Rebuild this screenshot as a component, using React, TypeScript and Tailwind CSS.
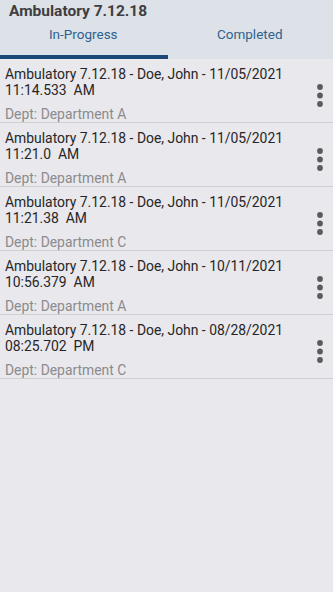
const rows = [
  { time: '11/05/2021', clock: '11:14.533  AM', dept: 'Department A' },
  { time: '11/05/2021', clock: '11:21.0  AM', dept: 'Department A' },
  { time: '11/05/2021', clock: '11:21.38  AM', dept: 'Department C' },
  { time: '10/11/2021', clock: '10:56.379  AM', dept: 'Department A' },
  { time: '08/28/2021', clock: '08:25.702  PM', dept: 'Department C' },
];

function MoreIcon() {
  return (
    <svg width="8" height="26" viewBox="0 0 8 26" className="shrink-0">
      <circle cx="4" cy="4" r="2.9" fill="#5b5b5d" />
      <circle cx="4" cy="12.5" r="2.9" fill="#5b5b5d" />
      <circle cx="4" cy="21" r="2.9" fill="#5b5b5d" />
    </svg>
  );
}

export default function App() {
  return (
    <div className="w-[333px] h-[592px] bg-[#e9e8ec] font-['Roboto',sans-serif] overflow-hidden">
      <div className="bg-[#dde1e8]">
        <div className="px-[9px] pt-[1px] h-[21px] text-[15.5px] leading-[20px] font-bold text-[#3e3e40]">
          Ambulatory 7.12.18
        </div>
        <div className="flex h-[38px]">
          <div className="flex-1 flex flex-col">
            <div className="flex-1 flex items-center justify-center pb-[7px] text-[13.5px] text-[#2f628f]">
              In-Progress
            </div>
            <div className="h-[4px] bg-[#1b4876] mr-[-1px]" />
          </div>
          <div className="flex-1 flex flex-col">
            <div className="flex-1 flex items-center justify-center pb-[7px] text-[13.5px] text-[#2f628f]">
              Completed
            </div>
            <div className="h-[4px]" />
          </div>
        </div>
      </div>
      {rows.map((r, i) => (
        <div key={i} className="flex items-center border-b border-[#cfcfd3] pl-[5px] pr-[9px]">
          <div className="flex-1 pt-[7px] text-[13.9px] leading-[16px] whitespace-pre">
            <div className="text-[#262628]">Ambulatory 7.12.18 - Doe, John - {r.time}</div>
            <div className="text-[#262628]">{r.clock}</div>
            <div className="mt-[8px] text-[#8b8b8e]">Dept: {r.dept}</div>
          </div>
          <div className="pt-[10px]">
            <MoreIcon />
          </div>
        </div>
      ))}
    </div>
  );
}
